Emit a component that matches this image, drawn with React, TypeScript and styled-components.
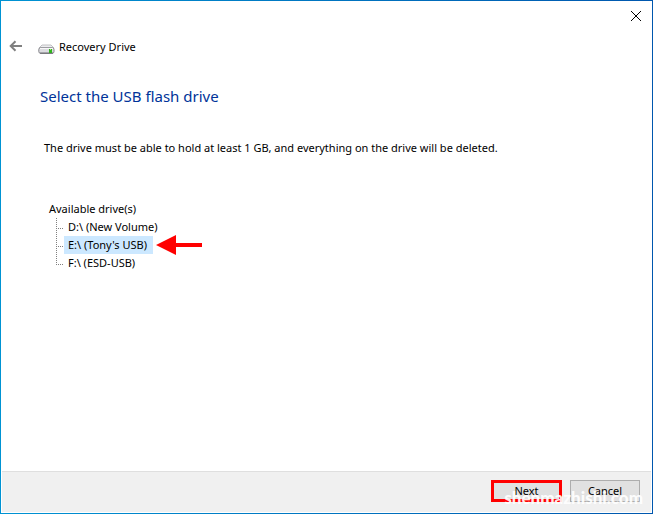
import React, { useState } from "react";
import styled, { createGlobalStyle } from "styled-components";

const GlobalStyle = createGlobalStyle`
  * { box-sizing: border-box; }
  body {
    margin: 0;
    font-family: "Noto Sans", "Open Sans", sans-serif;
    font-size: 11px;
    line-height: 18px;
    color: #000;
  }
`;

const Frame = styled.div`
  display: flex;
  min-height: 100vh;
  padding: 1px;
  background: linear-gradient(to right, #0093d3, #0057ae);
`;

const Dialog = styled.div`
  flex: 1;
  display: flex;
  flex-direction: column;
  background: #fff;
  padding-bottom: 1px;
`;

const TitleBar = styled.div`
  display: flex;
  justify-content: flex-end;
  padding: 4px 6px 0 0;
`;

const IconButton = styled.button`
  display: flex;
  align-items: center;
  justify-content: center;
  width: 20px;
  height: 20px;
  padding: 0;
  border: 0;
  background: transparent;
`;

const Header = styled.header`
  display: flex;
  align-items: center;
  height: 20px;
  margin-top: 12px;
  padding-left: 5px;
`;

const AppName = styled.span`
  display: flex;
  align-items: center;
  gap: 4px;
  margin-left: 12px;
`;

const Content = styled.main`
  flex: 1;
  padding: 27px 40px 0 39px;
`;

const Heading = styled.h1`
  margin: 0;
  font-size: 15px;
  line-height: 24px;
  font-weight: 400;
  color: #003399;
`;

const Message = styled.p`
  margin: 31px 0 0 4px;
`;

const DriveGroup = styled.section`
  margin: 43px 0 0 9px;
`;

const DriveLabel = styled.div``;

const DriveList = styled.ul`
  list-style: none;
  margin: 0;
  padding: 0 0 0 7px;
`;

const DriveItem = styled.li`
  display: flex;
  align-items: center;
  height: 18px;
`;

const Branch = styled.svg`
  flex: none;
  width: 8px;
  height: 18px;
`;

const DriveButton = styled.button<{ $selected: boolean }>`
  height: 18px;
  padding: 0 6px 0 4px;
  border: 0;
  background: ${(p) => (p.$selected ? "#cce8ff" : "transparent")};
  color: inherit;
  font: inherit;
  white-space: nowrap;
`;

const Pointer = styled.svg`
  flex: none;
  margin-left: 3px;
`;

const Footer = styled.footer`
  position: relative;
  display: flex;
  justify-content: flex-end;
  gap: 8px;
  margin: 0 1px;
  padding: 8px 11px 10px;
  border-top: 1px solid #dfdfdf;
  background: #f0f0f0;
`;

const PushButton = styled.button<{ $highlighted?: boolean }>`
  width: ${(p) => (p.$highlighted ? 71 : 70)}px;
  height: 22px;
  padding: 0;
  border: ${(p) => (p.$highlighted ? "3px solid #ff0000" : "1px solid #adadad")};
  background: #e1e1e1;
  color: #000;
  font: inherit;
  line-height: 14px;
`;

const Watermark = styled.span`
  position: absolute;
  right: 8px;
  bottom: 4px;
  font-family: Lato, "Liberation Sans", sans-serif;
  font-size: 17px;
  line-height: 20px;
  font-weight: 900;
  color: #fff;
  opacity: 0.9;
  pointer-events: none;
`;

const drives = ["D:\\ (New Volume)", "E:\\ (Tony's USB)", "F:\\ (ESD-USB)"];

function DriveIcon() {
  return (
    <svg width="17" height="18" viewBox="0 0 17 18" aria-hidden="true">
      <path d="M1 10 4 7h9l3 3z" fill="#ececee" stroke="#c0c0c3" />
      <rect x=".8" y="9.8" width="15.2" height="5.4" rx="1.6" fill="#dcdce0" stroke="#85858a" />
      <path d="M2 10.5h13" stroke="#f7f7f8" />
      <path d="M2 15.2h13" stroke="#66666a" />
      <rect x="11" y="11" width="3" height="4" fill="#2fb51c" />
      <path d="M12 11.5h1" stroke="#a4f07c" />
    </svg>
  );
}

export default function App() {
  const [selected, setSelected] = useState(1);
  return (
    <>
      <GlobalStyle />
      <Frame>
        <Dialog>
          <TitleBar>
            <IconButton type="button" aria-label="Close">
              <svg width="20" height="20" viewBox="0 0 20 20" aria-hidden="true">
                <path d="m5 6 10 10M15 6 5 16" stroke="#000" strokeWidth="1" />
              </svg>
            </IconButton>
          </TitleBar>
          <Header>
            <IconButton type="button" aria-label="Back">
              <svg width="20" height="20" viewBox="0 0 20 20" aria-hidden="true">
                <path d="M16 9H5M9.5 4.2 4.7 9l4.8 4.8" fill="none" stroke="#808080" strokeWidth="2" />
              </svg>
            </IconButton>
            <AppName>
              <DriveIcon />
              Recovery Drive
            </AppName>
          </Header>
          <Content>
            <Heading>Select the USB flash drive</Heading>
            <Message>
              The drive must be able to hold at least 1 GB, and everything on the drive will be deleted.
            </Message>
            <DriveGroup aria-labelledby="drives-label">
              <DriveLabel id="drives-label">Available drive(s)</DriveLabel>
              <DriveList>
                {drives.map((name, i) => (
                  <DriveItem key={name}>
                    <Branch viewBox="0 0 8 18" aria-hidden="true">
                      <path
                        d={i === drives.length - 1 ? "M.5 0v11" : "M.5 0v18"}
                        stroke="#808080"
                        strokeDasharray="1 1"
                      />
                      <path d="M0 10.5h8" stroke="#808080" strokeDasharray="1 1" />
                    </Branch>
                    <DriveButton
                      type="button"
                      $selected={i === selected}
                      aria-pressed={i === selected}
                      onClick={() => setSelected(i)}
                    >
                      {name}
                    </DriveButton>
                    {i === selected && (
                      <Pointer width="46" height="20" viewBox="0 0 46 20" aria-hidden="true">
                        <path d="M0 10 20 0v8h26v4H20v8z" fill="#ff0000" />
                      </Pointer>
                    )}
                  </DriveItem>
                ))}
              </DriveList>
            </DriveGroup>
          </Content>
          <Footer>
            <PushButton type="button" $highlighted>Next</PushButton>
            <PushButton type="button">Cancel</PushButton>
            <Watermark>shenmazhishi.com</Watermark>
          </Footer>
        </Dialog>
      </Frame>
    </>
  );
}
